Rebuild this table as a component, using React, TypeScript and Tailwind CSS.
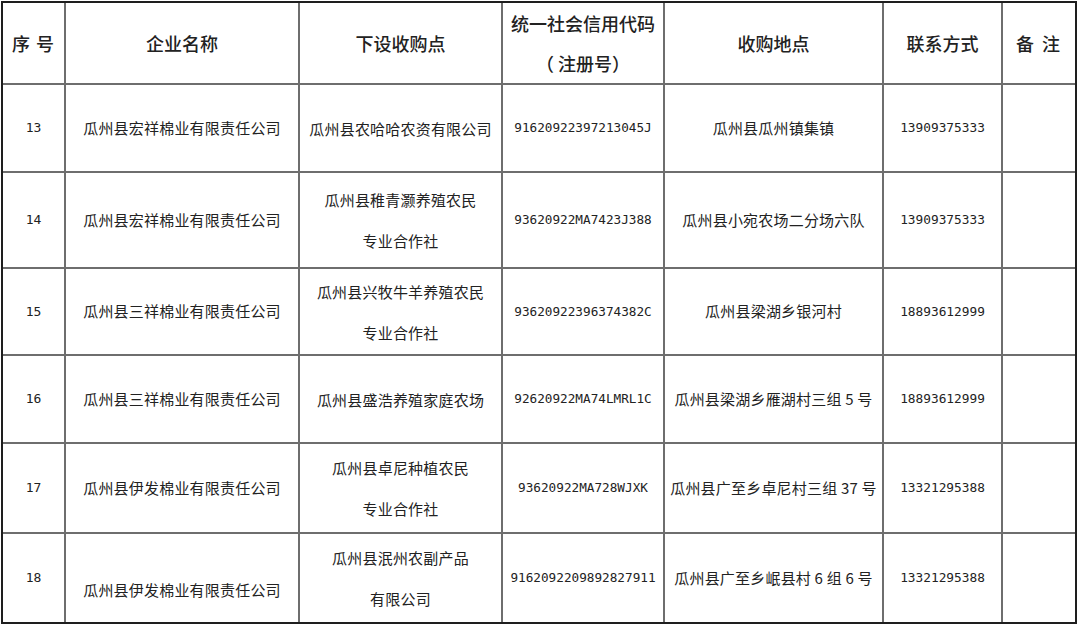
import React from "react";

type Row = {
  no: string;
  company: string;
  point: string[];
  code: string;
  addr: string;
  phone: string;
  companyShift?: boolean;
};

const rows: Row[] = [
  { no: "13", company: "瓜州县宏祥棉业有限责任公司", point: ["瓜州县农哈哈农资有限公司"], code: "91620922397213045J", addr: "瓜州县瓜州镇集镇", phone: "13909375333" },
  { no: "14", company: "瓜州县宏祥棉业有限责任公司", point: ["瓜州县稚青灏养殖农民", "专业合作社"], code: "93620922MA7423J388", addr: "瓜州县小宛农场二分场六队", phone: "13909375333" },
  { no: "15", company: "瓜州县三祥棉业有限责任公司", point: ["瓜州县兴牧牛羊养殖农民", "专业合作社"], code: "93620922396374382C", addr: "瓜州县梁湖乡银河村", phone: "18893612999" },
  { no: "16", company: "瓜州县三祥棉业有限责任公司", point: ["瓜州县盛浩养殖家庭农场"], code: "92620922MA74LMRL1C", addr: "瓜州县梁湖乡雁湖村三组 5 号", phone: "18893612999" },
  { no: "17", company: "瓜州县伊发棉业有限责任公司", point: ["瓜州县卓尼种植农民", "专业合作社"], code: "93620922MA728WJXK", addr: "瓜州县广至乡卓尼村三组 37 号", phone: "13321295388" },
  { no: "18", company: "瓜州县伊发棉业有限责任公司", point: ["瓜州县泯州农副产品", "有限公司"], code: "9162092209892827911", addr: "瓜州县广至乡岷县村 6 组 6 号", phone: "13321295388", companyShift: true },
];

const cjk = "font-['Noto_Sans_CJK_SC','Noto_Sans',sans-serif]";
const mono = "font-['DejaVu_Sans_Mono','Liberation_Mono',monospace]";
const head = `${cjk} text-[18px] font-medium`;

function Cell({ children, className = "" }: { children?: React.ReactNode; className?: string }) {
  return (
    <div className={`bg-white flex flex-col items-center justify-center text-center ${className}`}>
      {children}
    </div>
  );
}

export default function App() {
  return (
    <div className="w-[1080px] h-[626px] bg-white pl-[1px] pt-[1px] text-[#222]">
      <div className="w-[1076px] border-2 border-[#1e1e1e] bg-[#6e6e6e] grid gap-[2px] grid-cols-[61px_232px_201px_160px_217px_117px_72px] grid-rows-[80px_86px_94px_85px_86px_88px_88px]">
        {/* header */}
        <Cell className={`${head} tracking-[1px]`}>序&nbsp;号</Cell>
        <Cell className={head}>企业名称</Cell>
        <Cell className={head}>下设收购点</Cell>
        <Cell className={`${head} leading-[40px]`}>
          <span>统一社会信用代码</span>
          <span>（&nbsp;注册号）</span>
        </Cell>
        <Cell className={head}>收购地点</Cell>
        <Cell className={head}>联系方式</Cell>
        <Cell className={`${head} tracking-[2px]`}>备&nbsp;注</Cell>

        {rows.map((r) => (
          <React.Fragment key={r.no}>
            <Cell className={`${mono} text-[13px]`}>{r.no}</Cell>
            <Cell className={`${cjk} text-[15px] tracking-[0.2px] ${r.companyShift ? "pt-[24px]" : ""}`}>{r.company}</Cell>
            <Cell className={`${cjk} text-[15px] tracking-[0.2px] leading-[41px]`}>
              {r.point.map((p) => (
                <span key={p}>{p}</span>
              ))}
            </Cell>
            <Cell className={`${mono} text-[12.7px]`}>{r.code}</Cell>
            <Cell className={`${cjk} text-[15px] tracking-[0.2px]`}>{r.addr}</Cell>
            <Cell className={`${mono} text-[12.8px]`}>{r.phone}</Cell>
            <Cell />
          </React.Fragment>
        ))}
      </div>
    </div>
  );
}
